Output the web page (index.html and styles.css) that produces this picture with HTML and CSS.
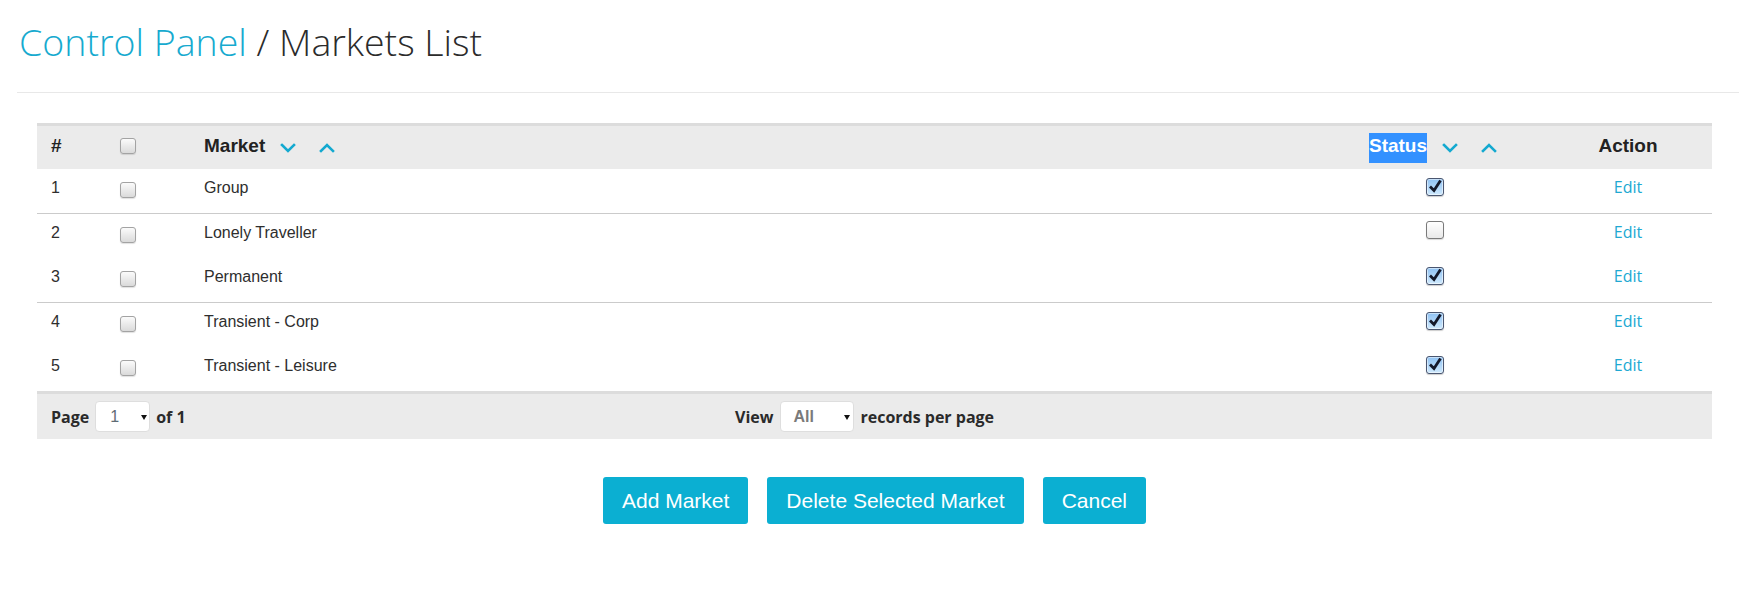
FILE: index.html
```html
<!DOCTYPE html>
<html>
<head>
<meta charset="utf-8">
<link rel="stylesheet" href="styles.css">
</head>
<body>
<div class="page">
  <h1 class="title"><a class="crumb" href="#">Control Panel</a> / Markets List</h1>
  <hr class="rule">
  <div class="grid">
    <table class="list">
      <colgroup>
        <col class="c-num"><col class="c-sel"><col class="c-name"><col class="c-status"><col class="c-action">
      </colgroup>
      <thead>
        <tr>
          <th class="num">#</th>
          <th class="sel"><span class="cb cb-head"></span></th>
          <th class="name">Market<svg class="chev first" width="16" height="10" viewBox="0 0 16 10"><path d="M2 2 L8 8 L14 2" /></svg><svg class="chev" width="16" height="10" viewBox="0 0 16 10"><path d="M2 8 L8 2 L14 8" /></svg></th>
          <th class="status"><span class="hl">Status</span><svg class="chev first" width="16" height="10" viewBox="0 0 16 10"><path d="M2 2 L8 8 L14 2" /></svg><svg class="chev" width="16" height="10" viewBox="0 0 16 10"><path d="M2 8 L8 2 L14 8" /></svg></th>
          <th class="action">Action</th>
        </tr>
      </thead>
      <tbody>
        <tr class="sep">
          <td class="num">1</td><td class="sel"><span class="cb"></span></td><td class="name">Group</td>
          <td class="status"><span class="xb on"><svg width="18" height="18" viewBox="0 0 18 18"><path d="M4 8.5 L8 12.5 L14.5 2.5"/></svg></span></td>
          <td class="action"><a class="edit" href="#">Edit</a></td>
        </tr>
        <tr>
          <td class="num">2</td><td class="sel"><span class="cb"></span></td><td class="name">Lonely Traveller</td>
          <td class="status"><span class="xb off"></span></td>
          <td class="action"><a class="edit" href="#">Edit</a></td>
        </tr>
        <tr class="sep">
          <td class="num">3</td><td class="sel"><span class="cb"></span></td><td class="name">Permanent</td>
          <td class="status"><span class="xb on"><svg width="18" height="18" viewBox="0 0 18 18"><path d="M4 8.5 L8 12.5 L14.5 2.5"/></svg></span></td>
          <td class="action"><a class="edit" href="#">Edit</a></td>
        </tr>
        <tr>
          <td class="num">4</td><td class="sel"><span class="cb"></span></td><td class="name">Transient - Corp</td>
          <td class="status"><span class="xb on"><svg width="18" height="18" viewBox="0 0 18 18"><path d="M4 8.5 L8 12.5 L14.5 2.5"/></svg></span></td>
          <td class="action"><a class="edit" href="#">Edit</a></td>
        </tr>
        <tr>
          <td class="num">5</td><td class="sel"><span class="cb"></span></td><td class="name">Transient - Leisure</td>
          <td class="status"><span class="xb on"><svg width="18" height="18" viewBox="0 0 18 18"><path d="M4 8.5 L8 12.5 L14.5 2.5"/></svg></span></td>
          <td class="action"><a class="edit" href="#">Edit</a></td>
        </tr>
      </tbody>
    </table>
    <div class="pager">
      <div class="pg-left">Page<span class="sbox sbox-page"><span class="sval">1</span><span class="arrow"></span></span>of 1</div>
      <div class="pg-view">View<span class="sbox sbox-view"><span class="sval">All</span><span class="arrow"></span></span>records per page</div>
    </div>
    <div class="buttons">
      <button class="btn">Add Market</button>
      <button class="btn">Delete Selected Market</button>
      <button class="btn">Cancel</button>
    </div>
  </div>
</div>
</body>
</html>
```

FILE: styles.css
```css
html, body {
  margin: 0;
  padding: 0;
  background: #fff;
}
body {
  font-family: "Liberation Sans", Arial, sans-serif;
  color: #333;
}
.page {
  padding: 0 17px;
}
.title {
  margin: 20px 0 0 2px;
  font-family: "Open Sans", sans-serif;
  font-weight: 300;
  font-size: 37.5px;
  line-height: 44px;
  color: #2b2b2b;
}
.crumb {
  color: #16aacf;
  text-decoration: none;
}
.rule {
  margin: 28px 0 30px;
  border: 0;
  border-top: 1px solid #e8e8e8;
  height: 0;
}
.grid {
  margin: 0 27px 0 20px;
}
.list {
  width: 100%;
  border-collapse: collapse;
  table-layout: fixed;
}
.c-num { width: 70px; }
.c-sel { width: 97px; }
.c-name { width: 1118px; }
.c-status { width: 222px; }
.c-action { width: 168px; }

.list th {
  background: #ebebeb;
  border-top: 3px solid #dcdcdc;
  padding: 9px 0 12px;
  line-height: 22px;
  font-size: 19px;
  font-weight: bold;
  color: #222;
  text-align: left;
  vertical-align: top;
  white-space: nowrap;
}
.list td {
  padding: 9px 0 15px;
  line-height: 20px;
  height: 20px;
  font-size: 16px;
  color: #2e2e2e;
  vertical-align: top;
}
.list tr.sep td {
  border-bottom: 1px solid #cbcbcb;
}
.list .num { padding-left: 14px; }
.list .sel { padding-left: 13px; }
.list .status { text-align: center; }
.list .action { text-align: center; }

.cb {
  display: inline-block;
  box-sizing: border-box;
  width: 16px;
  height: 16px;
  margin-top: 4px;
  vertical-align: top;
  border: 1px solid #a3a3a3;
  border-radius: 3px;
  background: linear-gradient(#fbfbfb, #dadada);
  box-shadow: 0 1px 1px rgba(0, 0, 0, 0.12);
}
.cb-head {
  margin-top: 3px;
}

.chev {
  display: inline-block;
  vertical-align: top;
  margin-top: 8px;
  margin-left: 23px;
}
.chev.first {
  margin-left: 15px;
}
.chev path {
  fill: none;
  stroke: #14a9d0;
  stroke-width: 2.6;
  stroke-linecap: square;
}
.hl {
  display: inline-block;
  vertical-align: top;
  padding: 2px 0 6px;
  margin: -2px 0 -6px;
  background: #3391ff;
  color: #fff;
}

.xb {
  display: inline-block;
  box-sizing: border-box;
  width: 18px;
  height: 18px;
  margin-left: 4px;
  vertical-align: top;
  border-radius: 3px;
  position: relative;
}
.xb.on {
  border: 1px solid #4a5670;
  background: linear-gradient(#8fc2f3, #cfe9fd);
  box-shadow: inset 0 0 0 1px rgba(255, 255, 255, 0.5), 0 1px 1px rgba(0, 0, 0, 0.2);
}
.xb.on svg {
  position: absolute;
  left: -1px;
  top: -1px;
}
.xb.on path {
  fill: none;
  stroke: #15192a;
  stroke-width: 2.8;
  stroke-linejoin: miter;
}
.xb.off {
  margin-top: -2px;
  border: 1.5px solid #7a7a7a;
  background: linear-gradient(#ffffff, #e9e9e9);
  box-shadow: 0 1px 1px rgba(0, 0, 0, 0.15);
}

.edit {
  display: inline-block;
  vertical-align: top;
  margin-top: -1px;
  line-height: 20px;
  font-family: "Open Sans", sans-serif;
  font-size: 16px;
  color: #20a8d2;
  text-decoration: none;
}

.pager {
  display: grid;
  grid-template-columns: 684px auto;
  align-items: center;
  padding: 7px 0 7px 14px;
  border-top: 3px solid #dcdcdc;
  background: #ebebeb;
  font-family: "Open Sans", sans-serif;
  font-weight: bold;
  font-size: 16px;
  color: #2a2a2a;
}
.pg-left, .pg-view {
  display: flex;
  align-items: center;
}
.sbox {
  display: inline-flex;
  align-items: center;
  box-sizing: border-box;
  height: 31px;
  margin: 0 6px 0 6px;
  background: #fff;
  border: 1px solid #dedede;
  border-radius: 4px;
  font-family: "Liberation Sans", Arial, sans-serif;
  font-size: 16px;
  color: #6e6e6e;
}
.sbox-page {
  width: 55px;
  padding-left: 14px;
}
.sbox-view {
  width: 74px;
  padding-left: 12px;
  margin-left: 7px;
}
.sbox-page .sval { width: 31px; font-weight: normal; color: #5f6b75; }
.sbox-view .sval { width: 51px; font-weight: bold; color: #7a7a7a; }
.arrow {
  width: 0;
  height: 0;
  border-left: 3px solid transparent;
  border-right: 3px solid transparent;
  border-top: 5px solid #111;
  margin-top: 1px;
}

.buttons {
  display: flex;
  justify-content: center;
  gap: 19px;
  margin-top: 38px;
}
.btn {
  height: 47px;
  padding: 0 19px;
  border: 0;
  border-radius: 3px;
  background: #0bafd2;
  color: #fff;
  font-family: "Liberation Sans", Arial, sans-serif;
  font-size: 21px;
  cursor: pointer;
}
```
